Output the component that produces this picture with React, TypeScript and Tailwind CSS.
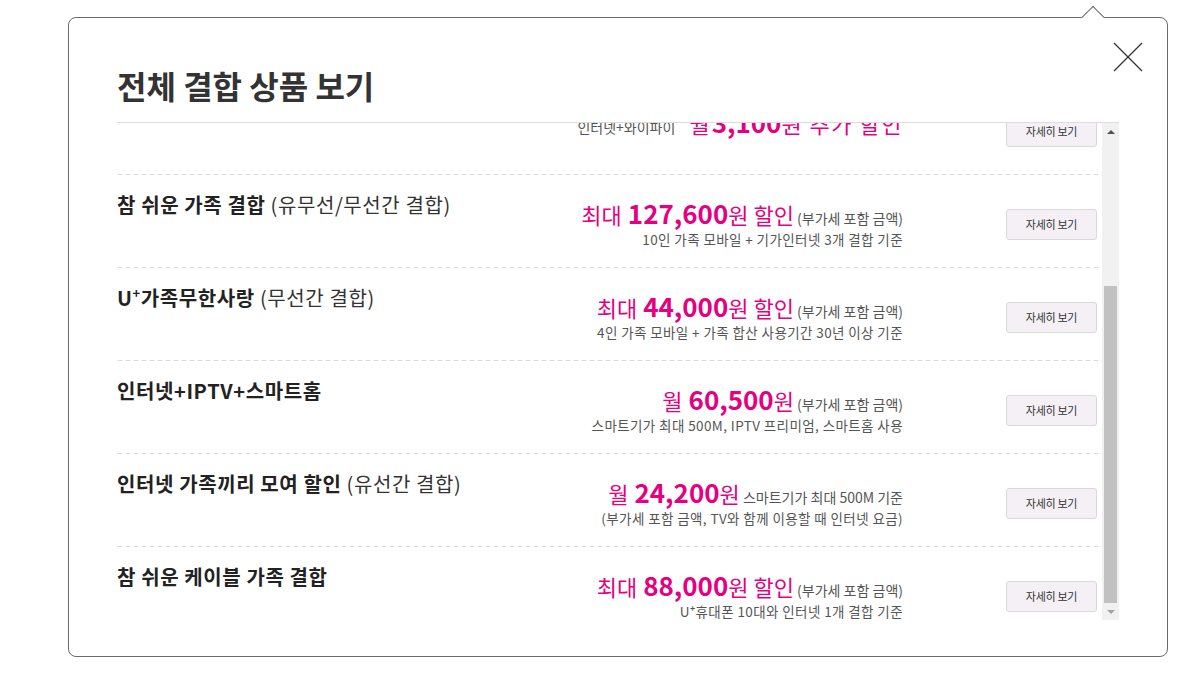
import React from "react";

type Row = {
	title: string;
	note?: string;
	prefix?: string;
	lead: string;
	amount: string;
	tail: string;
	extra?: string;
	sub?: string;
};

const rows: Row[] = [
	{
		title: "",
		prefix: "인터넷+와이파이",
		lead: "월",
		amount: "3,100",
		tail: "원 추가 할인",
	},
	{
		title: "참 쉬운 가족 결합",
		note: "(유무선/무선간 결합)",
		lead: "최대",
		amount: "127,600",
		tail: "원 할인",
		extra: "(부가세 포함 금액)",
		sub: "10인 가족 모바일 + 기가인터넷 3개 결합 기준",
	},
	{
		title: "U+가족무한사랑",
		note: "(무선간 결합)",
		lead: "최대",
		amount: "44,000",
		tail: "원 할인",
		extra: "(부가세 포함 금액)",
		sub: "4인 가족 모바일 + 가족 합산 사용기간 30년 이상 기준",
	},
	{
		title: "인터넷+IPTV+스마트홈",
		lead: "월",
		amount: "60,500",
		tail: "원",
		extra: "(부가세 포함 금액)",
		sub: "스마트기가 최대 500M, IPTV 프리미엄, 스마트홈 사용",
	},
	{
		title: "인터넷 가족끼리 모여 할인",
		note: "(유선간 결합)",
		lead: "월",
		amount: "24,200",
		tail: "원",
		extra: "스마트기가 최대 500M 기준",
		sub: "(부가세 포함 금액, TV와 함께 이용할 때 인터넷 요금)",
	},
	{
		title: "참 쉬운 케이블 가족 결합",
		lead: "최대",
		amount: "88,000",
		tail: "원 할인",
		extra: "(부가세 포함 금액)",
		sub: "U+휴대폰 10대와 인터넷 1개 결합 기준",
	},
];

// "U+" is written with a raised plus in this brand name
function Brand({ text }: { text: string }) {
	if (!text.startsWith("U+")) return <>{text}</>;
	return (
		<>
			U<sup className="text-[0.65em] top-[-0.6em] font-bold">+</sup>
			{text.slice(2)}
		</>
	);
}

function ProductRow({ row, first }: { row: Row; first?: boolean }) {
	return (
		<div className="flex items-start h-[93px] pt-[17px] pr-[5px] bg-[linear-gradient(to_right,#dcdcdc_5px,transparent_5px)] bg-[length:8px_1px] bg-repeat-x bg-bottom">
			<div className="flex-1 text-[20px] leading-[26px] text-[#222] tracking-[0.6px]">
				<span className="font-bold">
					<Brand text={row.title} />
				</span>
				{row.note && <span className="text-[#333]"> {row.note}</span>}
			</div>
			<div className={"text-right " + (first ? "mt-[8px]" : "mt-[6px]")}>
				<div className="text-[26px] leading-[30px] text-[#e4007f] whitespace-nowrap">
					{row.prefix && (
						<span className="text-[14px] leading-none text-[#555] mr-[14px]">{row.prefix}</span>
					)}
					<span className={"text-[22px] leading-none " + (first ? "mr-[2px]" : "mr-[6px]")}>{row.lead}</span>
					<span className="font-bold">{row.amount}</span>
					<span className={"text-[22px] leading-none " + (first ? "tracking-[1.5px]" : "")}>{row.tail}</span>
					{row.extra && (
						<span className="text-[14px] leading-none text-[#555]"> {row.extra}</span>
					)}
				</div>
				{row.sub && (
					<div className="mt-[2px] text-[13.5px] leading-[18px] tracking-[0.4px] text-[#555] whitespace-nowrap">
						<Brand text={row.sub} />
					</div>
				)}
			</div>
			<button className="ml-[103px] mt-[17px] w-[91px] h-[31px] rounded-[3px] border border-[#d9d9d9] bg-[#f4f0f6] text-[11px] tracking-[-0.3px] text-[#333]">
				자세히 보기
			</button>
		</div>
	);
}

export default function App() {
	return (
		<div className="min-h-screen bg-white pt-[17px] pl-[68px] font-['Noto_Sans_CJK_KR','Noto_Sans',sans-serif]">
			<div className="relative w-[1100px] h-[640px] rounded-[8px] border border-[#6b6b6b] bg-white px-[48px]">
				{/* little pointer on the top edge */}
				<div className="absolute left-[1016px] top-[-9px] w-[16px] h-[16px] rotate-45 border-l border-t border-[#6b6b6b] bg-white" />

				<button className="absolute right-[24px] top-[24px] w-[30px] h-[30px] flex items-center justify-center">
					<svg width="30" height="30" viewBox="0 0 30 30">
						<line x1="1" y1="1" x2="29" y2="29" stroke="#333" strokeWidth="1.2" />
						<line x1="29" y1="1" x2="1" y2="29" stroke="#333" strokeWidth="1.2" />
					</svg>
				</button>

				<div className="pt-[49px] pb-[18px] border-b border-[#dcdcdc]">
					<h2 className="text-[32px] leading-[37px] font-bold text-[#333]">전체 결합 상품 보기</h2>
				</div>

				<div className="flex h-[497px]">
					<div className="flex-1 overflow-hidden">
						<div className="mt-[-41px]">
							{rows.map((r, i) => (
								<ProductRow key={i} row={r} first={i === 0} />
							))}
						</div>
					</div>

					{/* scrollbar, scrolled to the end */}
					<div className="w-[17px] flex flex-col bg-[#f1f1f1]">
						<div className="h-[17px] flex items-center justify-center">
							<div className="w-0 h-0 border-l-[4px] border-r-[4px] border-b-[4px] border-l-transparent border-r-transparent border-b-[#505050]" />
						</div>
						<div className="flex-1 flex flex-col justify-end px-[2px]">
							<div className="h-[317px] bg-[#c1c1c1]" />
						</div>
						<div className="h-[17px] flex items-center justify-center">
							<div className="w-0 h-0 border-l-[4px] border-r-[4px] border-t-[4px] border-l-transparent border-r-transparent border-t-[#a3a3a3]" />
						</div>
					</div>
				</div>
			</div>
		</div>
	);
}
